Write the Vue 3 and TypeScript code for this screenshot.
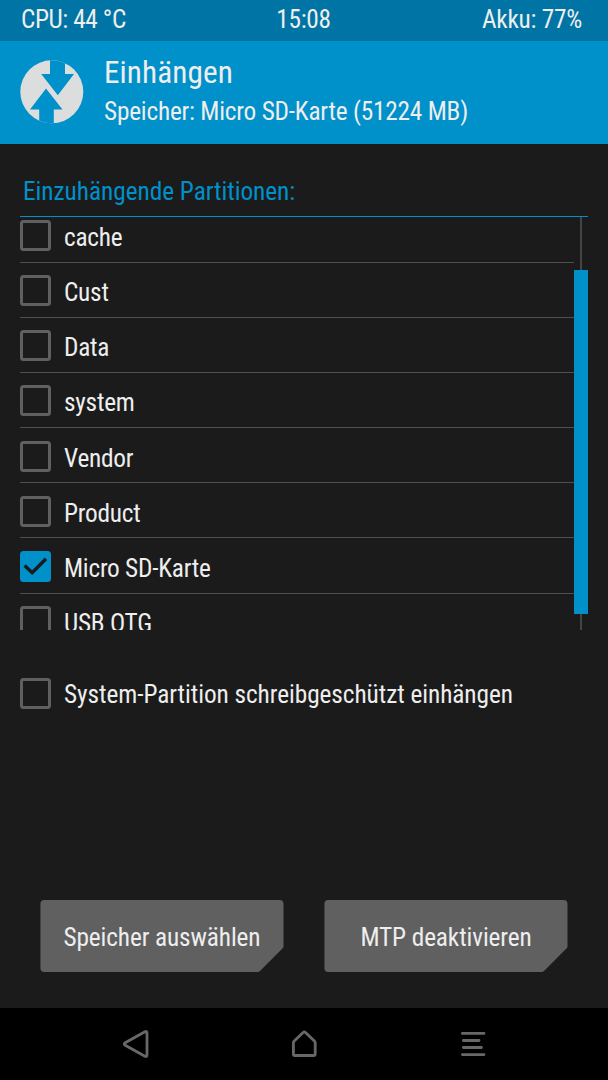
<script setup lang="ts">
import { ref } from 'vue'

interface Partition {
  name: string
  mounted: boolean
}

const partitions = ref<Partition[]>([
  { name: 'cache', mounted: false },
  { name: 'Cust', mounted: false },
  { name: 'Data', mounted: false },
  { name: 'system', mounted: false },
  { name: 'Vendor', mounted: false },
  { name: 'Product', mounted: false },
  { name: 'Micro SD-Karte', mounted: true },
  { name: 'USB OTG', mounted: false },
])
const readOnly = ref(false)
const actions: string[] = ['Speicher auswählen', 'MTP deaktivieren']
</script>

<template>
  <div class="screen">
    <div class="status">
      <span class="cpu">CPU: 44 °C</span>
      <span>15:08</span>
      <span>Akku: 77%</span>
    </div>
    <header class="header">
      <svg class="logo" width="64" height="64" viewBox="0 0 64 64">
        <defs>
          <clipPath id="disc"><circle cx="31.8" cy="31.8" r="31.5" /></clipPath>
        </defs>
        <g clip-path="url(#disc)">
          <rect width="64" height="64" fill="#dcdedd" />
          <path
            fill="#0090ca"
            d="M30-1V14H21.2L37.8 35.2L54 14H45V-1ZM26 28.5L10 49.5H19.2V65H33.8V49.5H42.5Z"
          />
        </g>
      </svg>
      <div class="titles">
        <h1>Einhängen</h1>
        <p>Speicher: Micro SD-Karte (51224 MB)</p>
      </div>
    </header>
    <main class="content">
      <h2>Einzuhängende Partitionen:</h2>
      <div class="list">
        <div class="rows">
          <div
            v-for="item in partitions"
            :key="item.name"
            class="row"
            @click="item.mounted = !item.mounted"
          >
            <span class="box" :class="{ checked: item.mounted }">
              <svg v-if="item.mounted" width="31" height="31" viewBox="0 0 31 31">
                <path d="M4.6 14.5L12.2 21.7L26 7.8" fill="none" stroke="#1b1b1b" stroke-width="3.4" />
              </svg>
            </span>
            <span class="label">{{ item.name }}</span>
          </div>
        </div>
        <div class="scroll"><div class="thumb"></div></div>
      </div>
      <div class="option" @click="readOnly = !readOnly">
        <span class="box" :class="{ checked: readOnly }"></span>
        <span class="label">System-Partition schreibgeschützt einhängen</span>
      </div>
      <div class="actions">
        <button v-for="label in actions" :key="label" type="button">
          <svg width="244" height="72" viewBox="0 0 244 72">
            <path
              fill="#606060"
              d="M4.4 0H239.5Q243.5 0 243.5 4V46.5Q243.5 47.5 242.7 48.3L220 71Q219 72 217.5 72H4.4Q.4 72 .4 68V4Q.4 0 4.4 0Z"
            />
          </svg>
          <span>{{ label }}</span>
        </button>
      </div>
    </main>
    <nav class="nav">
      <svg width="28" height="30" viewBox="0 0 28 30">
        <path d="M23.9 2.8Q26 1.8 26 4.2V25.8Q26 28.2 23.9 27.2L4.2 16.3Q2.2 15 4.2 13.7Z" />
      </svg>
      <svg width="28" height="30" viewBox="0 0 28 30">
        <path d="M13.1 3.5Q14.3 2.3 15.5 3.5L24.6 12.2Q25.2 12.8 25.2 13.7V25Q25.2 26.5 23.7 26.5H4.9Q3.4 26.5 3.4 25V13.7Q3.4 12.8 4 12.2Z" />
      </svg>
      <svg width="28" height="30" viewBox="0 0 28 30">
        <path d="M3.4 4.4H25M4.4 11.5H20M4.4 18.5H22.4M3.4 25.6H25" />
      </svg>
    </nav>
  </div>
</template>

<style>
body {
  margin: 0;
  background: #1b1b1b;
}
</style>

<style scoped>
.screen {
  display: flex;
  flex-direction: column;
  width: 608px;
  height: 1080px;
  overflow: hidden;
  background: #1b1b1b;
  color: #eee;
  font-family: "Roboto Condensed", Roboto, sans-serif;
  font-stretch: 75%;
  font-size: 25.3px;
  line-height: 30px;
  white-space: nowrap;
}
.status {
  box-sizing: border-box;
  display: grid;
  grid-template-columns: 1fr auto 1fr;
  height: 40.5px;
  padding: 5px 26px 0 21px;
  background: #0074a4;
  letter-spacing: -0.25px;
}
.status .cpu {
  letter-spacing: -0.4px;
}
.status span:nth-child(2) {
  position: relative;
  left: 2px;
}
.status span:last-child {
  text-align: right;
}
.header {
  box-sizing: border-box;
  display: flex;
  gap: 20px;
  height: 103.5px;
  padding: 19.5px 20px 0;
  background: #0090ca;
}
h1,
h2,
p {
  margin: 0;
  font-weight: 400;
}
h1 {
  font-size: 31.2px;
  line-height: 26px;
  letter-spacing: 0.1px;
}
p {
  padding-top: 11px;
  letter-spacing: -0.21px;
}
h2 {
  box-sizing: border-box;
  height: 41px;
  padding: 1px 0 0 3px;
  border-bottom: 1px solid #0090ca;
  color: #0090ca;
  font-size: 25.3px;
  letter-spacing: -0.04px;
}
.content {
  flex: 1;
  padding: 32px 20px 0;
}
.list {
  display: flex;
  height: 413px;
  overflow: hidden;
}
.rows {
  flex: 1;
  margin-top: -9.3px;
}
.row {
  box-sizing: border-box;
  display: flex;
  height: 55.125px;
  padding-top: 12.3px;
  border-bottom: 1px solid #505050;
  letter-spacing: -0.24px;
}
.box {
  box-sizing: border-box;
  flex: none;
  width: 31px;
  height: 31px;
  border: 3px solid #606060;
  border-radius: 3.5px;
}
.box.checked {
  border: 0;
  background: #0090ca;
}
.box svg {
  display: block;
}
.label {
  margin: 2px 0 0 13px;
}
.row .label {
  margin-top: 3px;
}
.scroll {
  width: 14px;
  background: linear-gradient(#444, #444) 6px 0 / 2px 100% no-repeat;
}
.thumb {
  height: 344px;
  margin-top: 53px;
  background: #0090ca;
}
.option {
  display: flex;
  margin-top: 48px;
  letter-spacing: -0.06px;
}
.actions {
  display: flex;
  justify-content: space-between;
  margin: 190px 20px 0;
}
button {
  display: grid;
  width: 244px;
  height: 72px;
  padding: 0;
  border: 0;
  background: none;
  color: inherit;
  font: inherit;
  letter-spacing: -0.12px;
}
button svg,
button span {
  grid-area: 1 / 1;
}
button span {
  padding-top: 23px;
}
.nav {
  box-sizing: border-box;
  display: flex;
  justify-content: space-between;
  height: 72px;
  padding: 21px 121px 0;
  background: #000;
}
.nav path {
  fill: none;
  stroke: #686868;
  stroke-width: 2.8;
  stroke-linecap: round;
}
</style>
